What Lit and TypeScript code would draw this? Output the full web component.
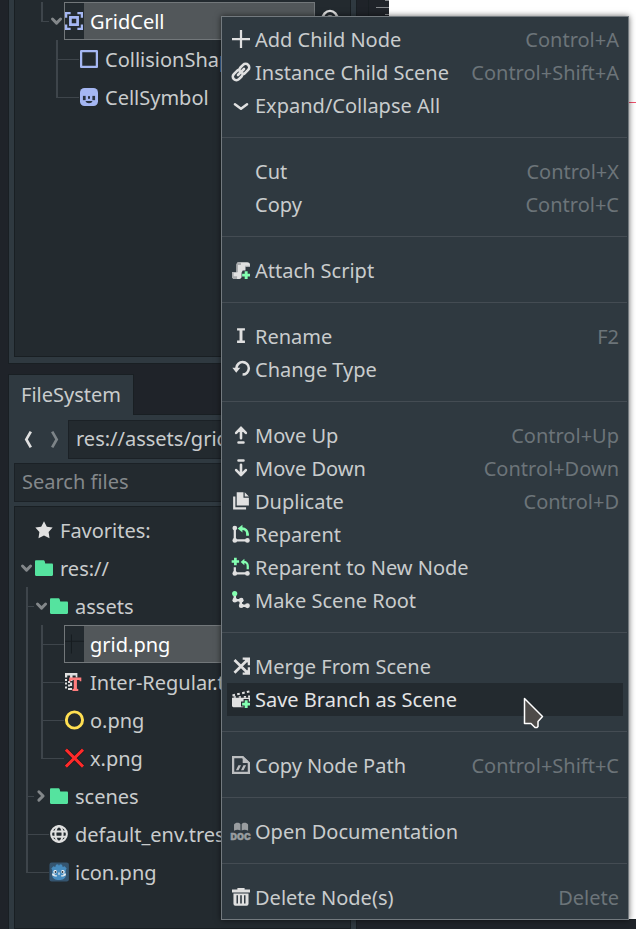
import { LitElement, html, svg, css, nothing } from "lit";
import { customElement, property } from "lit/decorators.js";
import { classMap } from "lit/directives/class-map.js";

const plus = svg`<path fill="#84ffb1" d="M11.300 9h2.600v2.300H16v2.500h-2.100v2.300h-2.600v-2.300H9v-2.500h2.300z"/>`;

const icons: Record<string, unknown> = {
  add: svg`<path d="M7 0v7H0v2h7v7h2V9h7V7H9V0z"/>`,
  link: svg`<g fill="none" stroke="#e0e0e0" stroke-width="2.300" stroke-linecap="round" transform="rotate(-45 8 8)"><path d="M7.200 4.800H2.200a3.200 3.200 0 0 0 0 6.400h3.300a3.200 3.200 0 0 0 2.700-1.500M8.800 11.200h5a3.200 3.200 0 0 0 0-6.400h-3.300a3.200 3.200 0 0 0-2.700 1.500M4.200 8h7.600"/></g>`,
  expand: svg`<path fill="none" stroke="#e0e0e0" stroke-width="2.200" stroke-linecap="round" stroke-linejoin="round" d="M2.600 7.300 8 11.300l5.400-4"/>`,
  script: svg`<path d="M6 1h7.500A2.500 2.500 0 0 1 16 3.500V5h-4v3.500H9.500l-1 2v4A2 2 0 0 1 6.500 16H2.500A2.500 2.500 0 0 1 0 13.500V10h4V3a2 2 0 0 1 2-2z"/><path fill="#a9acae" d="M6 1a2 2 0 0 0-2 2v7h1.300V3.500H8V1zM0 10h1.500v3.500h3V16h-2A2.500 2.500 0 0 1 0 13.500zM11.500 5H16v-.8h-4.500z"/>${plus}`,
  rename: svg`<path d="M4.500 1h7v2.200H9.300V12h2.200v2.200h-7V12h2.200V3.200H4.500z"/>`,
  reload: svg`<path d="M9.400.700a6.700 6.700 0 0 0-6.600 6.100H.300L3.800 11.300 7.400 6.800H5.100a4.400 4.400 0 1 1 4.300 5v2.300a6.700 6.700 0 0 0 0-13.400z"/>`,
  up: svg`<path fill="none" stroke="#e0e0e0" stroke-width="2.300" stroke-linecap="round" stroke-linejoin="round" d="M8 10.800V1.700M3.700 6.200 8 1.700l4.300 4.500M5.800 14.700h4.400"/>`,
  down: svg`<path fill="none" stroke="#e0e0e0" stroke-width="2.300" stroke-linecap="round" stroke-linejoin="round" d="M8 5.200v9.100M3.700 9.800 8 14.300l4.300-4.500M5.800 1.300h4.400"/>`,
  duplicate: svg`<path d="M1 4h2v9.500h9.500v2H1z"/><path d="M4.200.300h6V5H15v7H4.200zM11.300.300 15 3.900h-3.700z"/>`,
  reparent: svg`<path fill="none" stroke="#e0e0e0" stroke-width="2" d="M2.500 2.700v11h11"/><circle cx="2.500" cy="2.700" r="2.100"/><circle cx="2.500" cy="13.700" r="2.100"/><circle cx="13.700" cy="13.700" r="2.100"/><path fill="none" stroke="#84ffb1" stroke-width="2.500" d="M13.800 9.500V8A4.800 4.800 0 0 0 9 3.200H8"/><path fill="#84ffb1" d="M9.300-.300v7L5 3.200z"/>`,
  reparentNew: svg`<path fill="none" stroke="#e0e0e0" stroke-width="2" d="M2.500 8.300v5.400h11"/><circle cx="2.500" cy="13.700" r="2.100"/><circle cx="13.700" cy="13.700" r="2.100"/><path fill="none" stroke="#84ffb1" stroke-width="2" d="M14 10V7a3.500 3.500 0 0 0-3.500-3.500H10"/><path fill="#84ffb1" d="M11 .600v5.800L7.700 3.500zM1.800-.200h2.400v2.100h2.100v2.300H4.200v2.200H1.800V4.200H-.300V1.900h2.100z"/>`,
  root: svg`<path fill="none" stroke="#e0e0e0" stroke-width="2.200" d="M2.500 3v5.200h5.300v4.900h6"/><circle cx="2.500" cy="8.200" r="2.100"/><circle cx="8.200" cy="8.200" r="2.100"/><circle cx="8.200" cy="13.100" r="2.100"/><circle cx="13.700" cy="13.100" r="2.200"/><circle fill="#84ffb1" cx="2.400" cy="2.300" r="2.300"/>`,
  merge: svg`<path fill="none" stroke="#e0e0e0" stroke-width="2.400" d="M2.200 2.600 13.800 14M2.200 14 13.800 2.400"/><path d="M9.500.500H16v6.800h-2V2.500H9.500zM9.500 15.800H16V9h-2v4.800H9.500z"/><path d="m10.500 1.500 4.500-.2V6zM10.500 15l4.500.200V10.500z"/>`,
  clapper: svg`<path d="M0 6.800h16v7.200a1.300 1.300 0 0 1-1.300 1.300H1.300A1.300 1.300 0 0 1 0 14z"/><path fill="#232a2f" d="M10.300 8h4.600v2.300h2V16h-6.600v-1.300H8v-4.400h2.300z"/><path d="m.200 4 2.300-.600.400 1.800-2.300.600zM4.400 2.900l2.300-.500.400 1.800-2.300.500zM8.800 1.900l2.300-.5.400 1.800-2.300.5zM13 .900l2.300-.5.400 1.800-2.300.5zM1.500 5.600h2v1.200h-2zM6 5.600h2v1.200H6zM10.500 5.400h2v1.400h-2zM14.300 4.800H16v2h-1.700z"/>${plus}`,
  path: svg`<g opacity=".8"><path fill="none" stroke="#e0e0e0" stroke-width="2" d="M1 1h8.500L15 6.200V15H1z"/><path d="M9.500 0 16 6.300H9.500zM5.700 8.300H8l-2.200 4.400H3.500zM10.200 8.300h2.300l-2.200 4.400H8z"/></g>`,
  doc: svg`<g fill="#999da0"><path d="M1.800 7.800V2.300C3 .300 6.200.200 7.500 2v5.500c-1.700-1-3.800-.900-5.700.300zM14.300 7.800V2.300C13 .300 9.900.200 8.600 2v5.500c1.700-1 3.800-.900 5.700.300z"/><text x="7.700" y="16" text-anchor="middle" font-family="Inter, sans-serif" font-weight="900" font-size="8" stroke="#999da0" stroke-width=".4">DOC</text></g>`,
  trash: svg`<path d="M4.800 0h6.400v1.300H16V4H0V1.300h4.800z"/><path fill-rule="evenodd" d="M1.300 4.800h13.400V14a1.700 1.700 0 0 1-1.700 1.700H3A1.700 1.700 0 0 1 1.300 14zM4 6.500v7.200h1.300V6.500zM7.300 6.500v7.200h1.400V6.500zM10.700 6.500v7.200H12V6.500z"/>`,
  area: svg`<path fill="none" stroke="#a5b7f3" stroke-width="2" d="M1 5V1h4M11 1h4v4M15 11v4h-4M5 15H1v-4"/><path fill="none" stroke="#a5b7f3" stroke-width="2.400" d="M4.800 4.800h6.400v6.400H4.800z"/>`,
  shape: svg`<path fill="none" stroke="#a5b7f3" stroke-width="2" stroke-linejoin="round" d="M1 1h14v14H1z"/>`,
  sprite: svg`<rect fill="#a5b7f3" width="16" height="16" rx="4"/><g fill="#2a3340"><rect x="2.600" y="7" width="2.400" height="3.800"/><rect x="11" y="7" width="2.400" height="3.800"/><rect x="7.100" y="7" width="1.800" height="2.700" rx=".8"/><path d="M4.800 11.500h6.400a3.300 2.600 0 0 1-6.400 0z"/></g>`,
  star: svg`<path d="M8 .200 10.500 5l5.200.800-3.600 3.900.800 5.600L8 12.900l-4.900 2.400.800-5.600L.300 5.800 5.500 5z"/>`,
  folder: svg`<path fill="#55e39f" d="M1 1.200h6.200c.800 0 1.300.400 1.500 1l.4 1.800H15c.600 0 1 .400 1 1v9c0 .600-.400 1-1 1H1c-.600 0-1-.400-1-1v-11.800c0-.600.400-1 1-1z"/>`,
  grid: svg`<path fill="#171c20" d="M5.300-.500h.9v17h-.9zM0 5.200h16.800v.9H0z"/>`,
  font: svg`<path d="M0 0h11v4H9.500V2.200H6.700v5H4.500v-5H2V4H0zM0 5.300h1.800v1.800H0zM2.700 7h1.800v1.800H2.700zM0 8.500h1.800v1.800H0zM2.700 10.300h1.800v1.800H2.700zM0 12h1.800v1.800H0zM2.700 13.300h3.500v1.800H2.700zM4.500 8.500h1.800v3H4.500z"/><path fill="#ff7d7d" d="M3.700 4h10.800v3.400h-1.300l-.400-1.200h-2.200v7.700l1.200.3V16H6.600v-1.800l1.200-.3V6.200H5.700l-.4 1.200H3.700z"/>`,
  ring: svg`<circle cx="8.400" cy="8" r="7.200" fill="none" stroke="#ffdf52" stroke-width="2.600"/>`,
  cross: svg`<path fill="none" stroke="#15191d" stroke-width="3.800" d="m.800.600 15.200 15M16 .600.800 15.600"/><path fill="none" stroke="#ff2a2a" stroke-width="2.700" d="m.800.600 15.200 15M16 .600.800 15.600"/>`,
  globe: svg`<g fill="none" stroke="#e0e0e0" stroke-width="1.800"><circle cx="8" cy="8" r="7"/><ellipse cx="8" cy="8" rx="3.200" ry="7"/><path d="M1.500 5.700h13M1.500 10.500h13"/></g>`,
  godot: svg`<rect x="-.5" y="-.5" width="17.300" height="17" rx="2" fill="#355570"/><path fill="#478cbf" d="m1.200 4.800 1.800-2 1.700.800.600-2 1.900-.6.800 1.400.8-1.400 1.900.6.600 2 1.700-.8 1.800 2-.8 1.700v4.500c0 5.400-12 5.400-12 0V6.500z"/><path fill="#e8eef2" d="M1.900 9.400h2.200v1.500h2v1H4.300l-2.400-1zM14.100 9.400h-2.200v1.500h-2v1h1.800l2.400-1zM7.400 8.500h1.200v2H7.400z"/><circle cx="4.600" cy="7.800" r="1.600" fill="#fff"/><circle cx="11.400" cy="7.800" r="1.600" fill="#fff"/><circle cx="4.900" cy="7.900" r=".9" fill="#2c3a48"/><circle cx="11.100" cy="7.900" r=".9" fill="#2c3a48"/>`,
  eye: svg`<path fill="none" stroke="#e0e0e0" stroke-width="2.200" d="M.500 8C2-4 14-4 15.500 8 14 14 2 14 .500 8z"/><circle cx="8" cy="6.500" r="3.600"/>`,
  chevronDown: svg`<path fill="none" stroke="#83878a" stroke-width="2.600" stroke-linecap="round" stroke-linejoin="round" d="M4 6.300 7.600 9.900l3.600-3.600"/>`,
  chevronRight: svg`<path fill="none" stroke="#83878a" stroke-width="2.600" stroke-linecap="round" stroke-linejoin="round" d="M5.200 4.200 9 8l-3.800 3.700"/>`,
  back: svg`<path fill="none" stroke="#e0e0e0" stroke-width="2.400" d="M10.500.500 6.500 7.500l4 7"/>`,
  forward: svg`<path fill="none" stroke="#7d8488" stroke-width="2.400" d="m5.500.500 4 7-4 7"/>`,
};

const icon = (name: string) =>
  html`<svg class="icon" viewBox="0 0 16 16" aria-hidden="true">${icons[name]}</svg>`;

type Guide = "none" | "pass" | "tee" | "end";
interface TreeRow {
  label: string;
  icon: string;
  guides: Guide[];
  arrow?: "down" | "right";
  selected?: boolean;
  visibility?: boolean;
}
type MenuEntry = { label: string; icon?: string; keys?: string; hover?: boolean } | null;

const sceneRows: TreeRow[] = [
  { label: "GridCell", icon: "area", guides: ["none", "end"], arrow: "down", selected: true, visibility: true },
  { label: "CollisionShape2D", icon: "shape", guides: ["none", "none", "tee"] },
  { label: "CellSymbol", icon: "sprite", guides: ["none", "none", "end"] },
];

const fileRows: TreeRow[] = [
  { label: "Favorites:", icon: "star", guides: [] },
  { label: "res://", icon: "folder", guides: [], arrow: "down" },
  { label: "assets", icon: "folder", guides: ["tee"], arrow: "down" },
  { label: "grid.png", icon: "grid", guides: ["pass", "tee"], selected: true },
  { label: "Inter-Regular.ttf", icon: "font", guides: ["pass", "tee"] },
  { label: "o.png", icon: "ring", guides: ["pass", "tee"] },
  { label: "x.png", icon: "cross", guides: ["pass", "end"] },
  { label: "scenes", icon: "folder", guides: ["tee"], arrow: "right" },
  { label: "default_env.tres", icon: "globe", guides: ["tee"] },
  { label: "icon.png", icon: "godot", guides: ["end"] },
];

const menuEntries: MenuEntry[] = [
  { label: "Add Child Node", icon: "add", keys: "Control+A" },
  { label: "Instance Child Scene", icon: "link", keys: "Control+Shift+A" },
  { label: "Expand/Collapse All", icon: "expand" },
  null,
  { label: "Cut", keys: "Control+X" },
  { label: "Copy", keys: "Control+C" },
  null,
  { label: "Attach Script", icon: "script" },
  null,
  { label: "Rename", icon: "rename", keys: "F2" },
  { label: "Change Type", icon: "reload" },
  null,
  { label: "Move Up", icon: "up", keys: "Control+Up" },
  { label: "Move Down", icon: "down", keys: "Control+Down" },
  { label: "Duplicate", icon: "duplicate", keys: "Control+D" },
  { label: "Reparent", icon: "reparent" },
  { label: "Reparent to New Node", icon: "reparentNew" },
  { label: "Make Scene Root", icon: "root" },
  null,
  { label: "Merge From Scene", icon: "merge" },
  { label: "Save Branch as Scene", icon: "clapper", hover: true },
  null,
  { label: "Copy Node Path", icon: "path", keys: "Control+Shift+C" },
  null,
  { label: "Open Documentation", icon: "doc" },
  null,
  { label: "Delete Node(s)", icon: "trash", keys: "Delete" },
];

const shared = css`
  * { box-sizing: border-box; }
  .icon { display: block; flex: none; width: 18px; height: 18px; fill: #e0e0e0; overflow: visible; }
  button { margin: 0; padding: 0; border: 0; background: none; color: inherit; font: inherit; text-align: left; }
`;

@customElement("node-tree")
export class NodeTree extends LitElement {
  @property({ attribute: false }) rows: TreeRow[] = [];
  @property() label = "";

  static styles = [shared, css`
    :host { display: block; border: 1px solid #191f23; background: #232a2f; overflow: hidden; }
    .rows { margin: 0; padding: 0 0 0 4px; list-style: none; }
    .row { display: flex; height: 38px; white-space: nowrap; }
    .guide { --line: #3e454b; flex: none; width: 15px; background-repeat: no-repeat; }
    .pass { background-image: linear-gradient(var(--line), var(--line)); background-size: 2px 100%; background-position: 7px 0; }
    .tee, .end {
      background-image: linear-gradient(var(--line), var(--line)), linear-gradient(var(--line), var(--line));
      background-size: 2px 100%, 8px 1px;
      background-position: 7px 0, 7px 19px;
    }
    .end { background-size: 2px 20px, 8px 1px; }
    .stem { background-image: linear-gradient(var(--line), var(--line)); background-size: 15px 1px; background-position: 0 19px; }
    .toggle { display: flex; align-items: center; justify-content: center; flex: none; width: 15px; }
    .cell { display: flex; flex: 1; align-items: center; gap: 7px; min-width: 0; border: 1px solid transparent; color: #c9cccd; }
    .text { padding-top: 2px; }
    .selected { border-color: #72777a; background: linear-gradient(#232a2f, #232a2f) 0 0 / 19px 100% no-repeat, #52575a; color: #fff; }
    .eye { display: flex; flex: none; align-items: center; width: 35px; padding-left: 6px; }
  `];

  render() {
    return html`<ul class="rows" role="tree" aria-label=${this.label}>
      ${this.rows.map((row) => html`<li class="row" role="treeitem" aria-selected=${row.selected ? "true" : "false"}>
        ${row.guides.map((guide) => html`<span class="guide ${guide}"></span>`)}
        ${row.arrow
          ? html`<button class="toggle" aria-label="Toggle ${row.label}">${icon(row.arrow === "down" ? "chevronDown" : "chevronRight")}</button>`
          : html`<span class="guide ${row.guides.length ? "stem" : ""}"></span>`}
        <span class=${classMap({ cell: true, selected: !!row.selected })}>${icon(row.icon)}<span class="text">${row.label}</span></span>
        ${row.visibility ? html`<button class="eye" aria-label="Toggle visibility">${icon("eye")}</button>` : nothing}
      </li>`)}
    </ul>`;
  }
}

@customElement("context-menu")
export class ContextMenu extends LitElement {
  static styles = [shared, css`
    :host { display: block; padding: 6px 0 5px; border: 1px solid #737a7f; background: #2f3940; box-shadow: 0 0 6px #0009; color: #c9cccd; }
    .item { display: flex; align-items: flex-start; gap: 5px; width: calc(100% - 10px); height: 33px; margin: 0 5px; padding: 0 4px 0 5px; line-height: 33px; white-space: nowrap; }
    .item .icon, .blank { flex: none; width: 18px; margin-top: 7px; }
    .keys { margin-left: auto; color: #6c7479; }
    .hover { background: #232a2f; color: #e3e4e5; }
    .rule { height: 1px; margin: 15px 1px 17px 0; border: 0; background: #444c53; }
  `];

  render() {
    return html`<div role="menu">${menuEntries.map((entry) => entry
      ? html`<button role="menuitem" class=${classMap({ item: true, hover: !!entry.hover })}>
          ${entry.icon ? icon(entry.icon) : html`<span class="blank"></span>`}
          <span>${entry.label}</span>
          ${entry.keys ? html`<span class="keys">${entry.keys}</span>` : nothing}
        </button>`
      : html`<hr class="rule">`)}</div>`;
  }
}

@customElement("app-root")
export class AppRoot extends LitElement {
  static styles = [shared, css`
    :host { display: block; position: relative; min-height: 100vh; overflow: hidden; background: #1f2329; color: #c9cccd; font: 20px/28px "Noto Sans", sans-serif; }
    .editor { display: flex; gap: 11px; min-height: 100vh; padding-left: 8px; }
    .docks { display: flex; flex-direction: column; flex: none; width: 349px; }
    .panel { padding: 5px; border: 1px solid #191f23; background: #2f3940; }
    .scene { padding-top: 0; padding-bottom: 6px; border-top: 0; margin-bottom: 10px; }
    .scene node-tree { min-height: 357px; padding-top: 2px; border-top: 0; }
    .tab { position: relative; align-self: flex-start; height: 41px; margin-bottom: -1px; padding: 0 12px; border: 1px solid #191f23; border-bottom: 0; background: #2f3940; line-height: 40px; }
    .files { display: flex; flex: 1; flex-direction: column; gap: 4px; padding-bottom: 0; border-bottom: 0; }
    .files node-tree { flex: 1; padding-top: 4px; }
    .path { display: flex; }
    .nav { display: flex; flex: none; align-items: center; justify-content: center; width: 27px; }
    .field { flex: 1; width: 100%; min-width: 0; height: 39px; margin: 0; padding: 0 7px 2px; border: 1px solid #1b2126; border-radius: 0; background: #232a2f; color: inherit; font: inherit; outline: 0; }
    .search { flex: none; }
    .field::placeholder { color: #84888b; opacity: 1; }
    .viewport { display: flex; flex: 1; margin-bottom: 9px; border-left: 1px solid #191f23; border-bottom: 1px solid #191f23; background: #fff; }
    .ruler { display: flex; flex-direction: column; align-items: flex-end; gap: 6px; width: 20px; background: #1f2329; }
    .tick { width: 4px; height: 1px; background: #878a8e; }
    .major { width: 13px; }
    .canvas { flex: 1; padding-top: 102px; }
    .axis { height: 1px; background: #f0506c; }
    .menu { position: absolute; top: 16px; left: 221px; right: 7px; }
    .pointer { position: absolute; top: 697px; left: 523px; width: 22px; height: 34px; }
  `];

  render() {
    return html`
      <div class="editor">
        <div class="docks">
          <section class="panel scene"><node-tree label="Scene" .rows=${sceneRows}></node-tree></section>
          <button class="tab" role="tab" aria-selected="true">FileSystem</button>
          <section class="panel files">
            <div class="path">
              <button class="nav" aria-label="Back">${icon("back")}</button>
              <button class="nav" aria-label="Forward">${icon("forward")}</button>
              <input class="field" aria-label="Path" value="res://assets/grid.png">
            </div>
            <input class="field search" aria-label="Search files" placeholder="Search files">
            <node-tree label="Files" .rows=${fileRows}></node-tree>
          </section>
        </div>
        <main class="viewport">
          <div class="ruler">
            <span class="tick"></span><span class="tick major"></span><span class="tick"></span>
          </div>
          <div class="canvas"><div class="axis"></div></div>
        </main>
      </div>
      <context-menu class="menu"></context-menu>
      <svg class="pointer" viewBox="0 0 22 34" aria-hidden="true">
        <path d="M1.500 1.500v25h6.500l4 4h2l1-1v-5l4.500-5z" fill="#4d4b49" stroke="#fff" stroke-width="1.500" stroke-linejoin="round"/>
      </svg>`;
  }
}
